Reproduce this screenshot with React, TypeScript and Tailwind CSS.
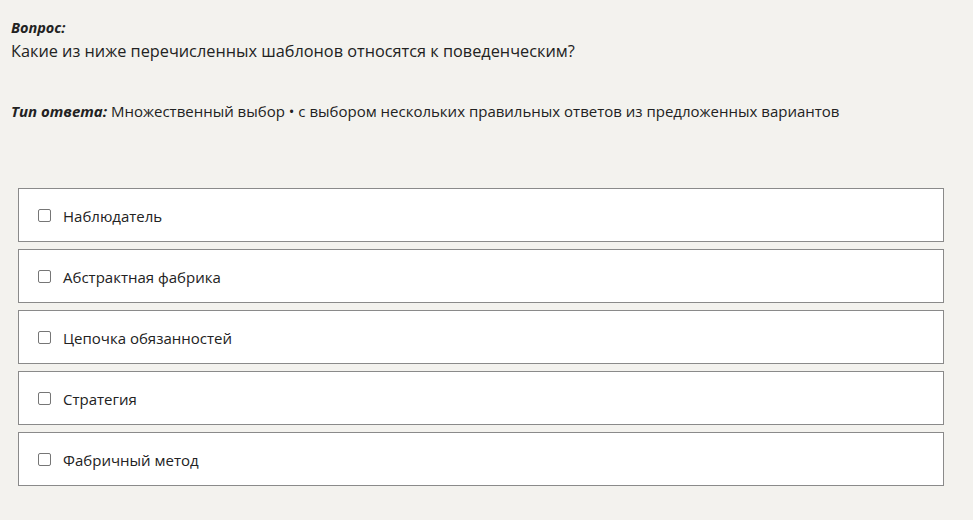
import React from "react";

const options = [
  "Наблюдатель",
  "Абстрактная фабрика",
  "Цепочка обязанностей",
  "Стратегия",
  "Фабричный метод",
];

export default function App() {
  return (
    <div
      className="w-[973px] h-[520px] bg-[#f3f2ee] text-[#222222] overflow-hidden"
      style={{ fontFamily: '"Open Sans", "Noto Sans", sans-serif' }}
    >
      <div className="pl-[11px] pt-[18px]">
        <div className="text-[14.5px] leading-[20px] font-bold italic">Вопрос:</div>
        <div className="text-[16.3px] leading-[24px] mt-[1px]">
          Какие из ниже перечисленных шаблонов относятся к поведенческим?
        </div>
        <div className="text-[15px] leading-[22px] mt-[37px]">
          <span className="font-bold italic">Тип ответа:</span> Множественный выбор • с выбором нескольких правильных ответов из предложенных вариантов
        </div>
      </div>
      <div className="ml-[18px] w-[926px] mt-[66px] flex flex-col gap-[7px]">
        {options.map((o) => (
          <label
            key={o}
            className="h-[54px] bg-white border border-[#8a8a8a] flex items-center pl-[19px] gap-[12px]"
          >
            <span className="w-[13px] h-[13px] border border-[#767676] rounded-[2px] bg-white shrink-0" />
            <span className="text-[15px] leading-[20px] pt-[1px]">{o}</span>
          </label>
        ))}
      </div>
    </div>
  );
}
